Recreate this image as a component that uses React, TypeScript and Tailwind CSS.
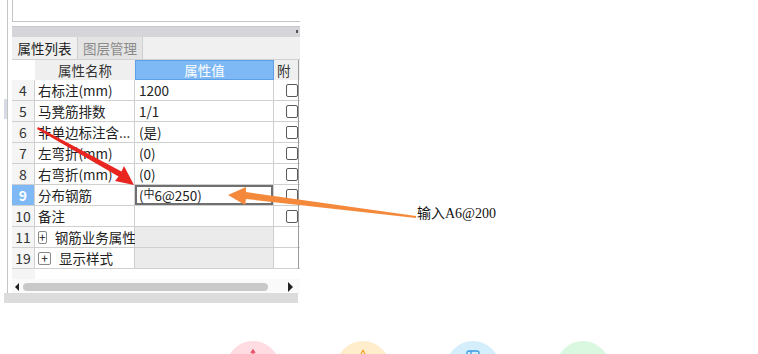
import React from 'react';

type Row = {
  no: string;
  name: string;
  value?: React.ReactNode;
  group?: boolean;
  selected?: boolean;
  check?: boolean;
};

const rows: Row[] = [
  { no: '4', name: '右标注(mm)', value: '1200', check: true },
  { no: '5', name: '马凳筋排数', value: '1/1', check: true },
  { no: '6', name: '非单边标注含...', value: '(是)', check: true },
  { no: '7', name: '左弯折(mm)', value: '(0)', check: true },
  { no: '8', name: '右弯折(mm)', value: '(0)', check: true },
  {
    no: '9',
    name: '分布钢筋',
    value: (
      <>
        (<span className="relative -top-[2px] text-[11px]">中</span>6@250)
      </>
    ),
    selected: true,
    check: true,
  },
  { no: '10', name: '备注', value: '', check: true },
  { no: '11', name: '钢筋业务属性', group: true },
  { no: '19', name: '显示样式', group: true },
];

const cols = 'grid grid-cols-[23px_100px_139px_36px]';

function Checkbox() {
  return <div className="w-[12px] h-[13px] border border-[#5a5a5a] rounded-[2px] bg-white" />;
}

function PropertyPanel() {
  return (
    <div className="relative w-[300px] h-[303px] overflow-hidden bg-white">
      {/* outer frame line */}
      <div className="absolute left-[7px] top-0 h-[293px] w-px bg-[#c4c4c4]" />
      <div className="absolute left-[4px] top-[99px] h-[20px] w-[3px] bg-[#d6dbe6]" />

      <div className="ml-[12px] flex flex-col">
        {/* top empty box */}
        <div className="h-[22px] border-l border-b border-[#c4c4c4]" />
        <div className="h-[4px]" />
        {/* title strip */}
        <div className="h-[11px] bg-[#d6d6da] border-t border-[#c8c8cc] relative">
          <span className="absolute right-[2px] top-[3px] w-[2px] h-[3px] bg-[#555]" />
        </div>
        {/* tabs */}
        <div className="h-[23px] flex bg-[#f0f0f0] border-b border-[#d0d0d0]">
          <div className="w-[65px] flex items-center justify-center text-[13.5px] text-[#222] bg-[#f0f0f0]">
            属性列表
          </div>
          <div className="w-[66px] flex items-center justify-center text-[13.5px] text-[#8a8a8a] bg-[#e4e4e4] border-l border-r border-[#d0d0d0]">
            图层管理
          </div>
        </div>
        {/* header */}
        <div className={`${cols} h-[20px] text-[13.5px] leading-[20px]`}>
          <div className="bg-white" />
          <div className="bg-[#efefef] text-center text-[#333]">属性名称</div>
          <div className="bg-[#7eb9f5] border border-[#5c9fe6] text-center text-white leading-[18px]">属性值</div>
          <div className="bg-[#efefef] pl-[3px] text-[#333]">附</div>
        </div>
        {/* rows */}
        {rows.map((r) => (
          <div
            key={r.no}
            className={`${cols} h-[21px] border-b border-[#cfcfcf] text-[13.5px] leading-[20px] text-[#222]`}
          >
            <div
              className={`flex items-center justify-center text-[14px] border-r border-[#cfcfcf] ${
                r.selected ? 'bg-[#7eb9f5] text-white font-bold' : 'bg-[#f5f5f5] text-[#333]'
              }`}
            >
              {r.no}
            </div>
            <div className="flex items-center pl-[3px] border-r border-[#cfcfcf] bg-white whitespace-nowrap">
              {r.group ? (
                <>
                  <span className="w-[13px] h-[13px] border border-[#888] rounded-[2px] flex items-center justify-center text-[12px] leading-none mr-[8px]">
                    +
                  </span>
                  {r.name}
                </>
              ) : (
                r.name
              )}
            </div>
            <div
              className={`flex items-center pl-[4px] whitespace-nowrap border-r border-[#cfcfcf] ${
                r.selected
                  ? 'bg-white shadow-[inset_0_0_0_2px_#707070]'
                  : r.group
                  ? 'bg-[#ebebeb]'
                  : 'bg-white'
              }`}
            >
              {r.value}
            </div>
            <div className="flex items-center pl-[12px] bg-white">{r.check && <Checkbox />}</div>
          </div>
        ))}
        <div className="grid grid-cols-[23px_1fr] h-[10px]">
          <div className="bg-[#f5f5f5]" />
          <div className="bg-white" />
        </div>
        {/* horizontal scrollbar */}
        <div className="h-[15px] flex items-center bg-[#fafafa]">
          <div className="w-0 h-0 ml-[3px] border-y-[4px] border-y-transparent border-r-[4px] border-r-[#222]" />
          <div className="ml-[4px] w-[245px] h-[8px] rounded-full bg-[#c9c9c9]" />
          <div className="ml-[20px] w-0 h-0 border-y-[5px] border-y-transparent border-l-[5px] border-l-[#222]" />
        </div>
      </div>
      {/* right edge line */}
      <div className="absolute left-[298px] top-[60px] h-[209px] w-px bg-[#9a9a9a]" />
      {/* bottom gray bar */}
      <div className="absolute left-[4px] top-[293px] w-[294px] h-[10px] bg-[#dcdcdc]" />
    </div>
  );
}

function Annotations() {
  return (
    <svg className="absolute left-0 top-0 pointer-events-none" width="758" height="354">
      {/* red arrow */}
      <polygon
        points="38,127 121.5,171.5 124,166 134,185 115,181 118.5,176.5 37,129"
        fill="#e8261f"
      />
      {/* orange arrow */}
      <polygon points="416,216 246,192 246,187 228,195 245,205 246,199 416,218" fill="#f5893b" />
    </svg>
  );
}

function Circles() {
  return (
    <div className="flex gap-[56px] pl-[226px] pt-[38px]">
      <div className="w-[54px] h-[54px] rounded-full bg-[#ffdbe2] flex justify-center pt-[8px]">
        <svg width="10" height="10" viewBox="0 0 10 10">
          <path d="M5 1 L5 5 M3 4 L5 1 L7 4" stroke="#e9546b" strokeWidth="1.4" fill="none" />
        </svg>
      </div>
      <div className="w-[54px] h-[54px] rounded-full bg-[#ffedcc] flex justify-center pt-[8px]">
        <svg width="10" height="10" viewBox="0 0 10 10">
          <path d="M5 1 L3 5 L3 9 M5 1 L7 5 L7 9" stroke="#f3a72c" strokeWidth="1.2" fill="none" />
        </svg>
      </div>
      <div className="w-[54px] h-[54px] rounded-full bg-[#d5eefc] flex justify-center pt-[9px]">
        <svg width="16" height="10" viewBox="0 0 16 10">
          <path d="M2 9 L2 3 Q2 1 4 1 L12 1 Q14 1 14 3 L14 9 M6 1 L6 5" stroke="#3a9be6" strokeWidth="1.3" fill="none" />
        </svg>
      </div>
      <div className="w-[54px] h-[54px] rounded-full bg-[#daf7e0]" />
    </div>
  );
}

export default function App() {
  return (
    <div
      className="relative w-[758px] h-[354px] overflow-hidden bg-white"
      style={{ fontFamily: '"Noto Sans CJK SC", "Noto Sans", sans-serif' }}
    >
      <PropertyPanel />
      <Circles />
      <div
        className="absolute left-[417px] top-[205px] text-[14px] leading-[18px] text-[#111]"
        style={{ fontFamily: '"Liberation Serif", "Noto Sans CJK SC", serif' }}
      >
        输入A6@200
      </div>
      <Annotations />
    </div>
  );
}
